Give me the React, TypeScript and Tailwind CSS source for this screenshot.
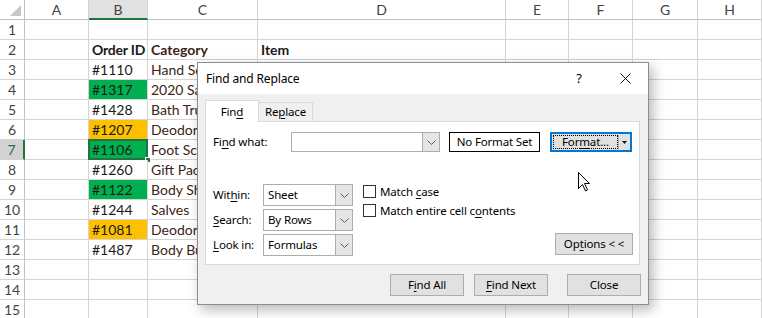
import type { ReactNode } from 'react';

const cols = ['A', 'B', 'C', 'D', 'E', 'F', 'G', 'H'];

type Row = { b?: string; c?: string; d?: string; fill?: string; bold?: boolean; selected?: boolean };

const rows: Row[] = [
  {},
  { b: 'Order ID', c: 'Category', d: 'Item', bold: true },
  { b: '#1110', c: 'Hand Soap' },
  { b: '#1317', c: '2020 Sampler', fill: 'green' },
  { b: '#1428', c: 'Bath Truffles' },
  { b: '#1207', c: 'Deodorant', fill: 'yellow' },
  { b: '#1106', c: 'Foot Scrub', fill: 'green', selected: true },
  { b: '#1260', c: 'Gift Pack' },
  { b: '#1122', c: 'Body Shimmer', fill: 'green' },
  { b: '#1244', c: 'Salves' },
  { b: '#1081', c: 'Deodorant', fill: 'yellow' },
  { b: '#1487', c: 'Body Butter' },
  {},
  {},
  {},
];

function U({ children }: { children: ReactNode }) {
  return <span className="underline underline-offset-2">{children}</span>;
}

function Chevron() {
  return (
    <svg width="9" height="5" viewBox="0 0 9 5" className="block">
      <polyline points="0.5,0.5 4.5,4.5 8.5,0.5" fill="none" stroke="#5a5a5a" strokeWidth="1" />
    </svg>
  );
}

function Combo({ value, className }: { value?: string; className: string }) {
  return (
    <div className={`flex border border-[#adadad] bg-white ${className}`}>
      <div className="flex flex-1 items-center pl-[4px] text-black">{value}</div>
      <div className="flex w-[17px] items-center justify-center border-l border-[#adadad] bg-[#e5e5e5]">
        <Chevron />
      </div>
    </div>
  );
}

function Btn({ children, className = '' }: { children: ReactNode; className?: string }) {
  return (
    <div
      className={`flex h-[22px] w-[74px] items-center justify-center border border-[#adadad] bg-[#e1e1e1] leading-none text-black ${className}`}
    >
      <span>{children}</span>
    </div>
  );
}

function Checkbox({ children }: { children: ReactNode }) {
  return (
    <div className="flex h-[13px] items-center gap-[4px]">
      <div className="h-[13px] w-[13px] border border-[#333333] bg-white" />
      <span className="whitespace-nowrap leading-none text-black">{children}</span>
    </div>
  );
}

function Dialog() {
  return (
    <div className="absolute left-[197px] top-[62px] flex h-[243px] w-[452px] flex-col border border-[#8c8c8c] bg-[#f0f0f0] font-['Noto_Sans',sans-serif] text-[11.5px] tracking-[-0.15px] shadow-[4px_5px_12px_rgba(0,0,0,0.28)]">
      <div className="flex h-[31px] items-center bg-white pl-[8px]">
        <span className="flex-1 text-[12px] text-black">Find and Replace</span>
        <span className="flex w-[46px] justify-center text-[13px] text-black">?</span>
        <div className="flex w-[46px] justify-center">
          <svg width="11" height="11" viewBox="0 0 11 11">
            <path d="M0.5 0.5 L10.5 10.5 M10.5 0.5 L0.5 10.5" stroke="#111" strokeWidth="1" />
          </svg>
        </div>
      </div>

      <div className="flex flex-col px-[7px] pt-[6px]">
        <div className="flex items-end">
          <div className="relative z-10 -mb-px flex h-[22px] w-[54px] items-center justify-center border border-b-0 border-[#d9d9d9] bg-white leading-none text-black">
            <span>
              Fin<U>d</U>
            </span>
          </div>
          <div className="flex h-[19px] w-[54px] items-center justify-center border border-b-0 border-l-0 border-[#d9d9d9] leading-none text-black">
            <span>
              Re<U>p</U>lace
            </span>
          </div>
        </div>

        <div className="mr-[1px] flex h-[144px] flex-col border border-[#d9d9d9] bg-white pl-[7px] pr-[6px]">
          <div className="mt-[10px] flex h-[20px] items-center">
            <span className="w-[78px] leading-none text-black">
              Fi<U>n</U>d what:
            </span>
            <Combo className="h-[20px] w-[149px]" />
            <div className="ml-[9px] flex h-[20px] w-[91px] items-center justify-center border border-black text-black">
              No Format Set
            </div>
            <div className="ml-[10px] flex h-[20px] w-[82px] items-center border-2 border-[#0078d7] bg-[#e1e1e1] p-px">
              <div className="flex h-full flex-1 items-center justify-center border border-dotted border-black leading-none text-black">
                <span>
                  For<U>m</U>at...
                </span>
              </div>
              <div className="flex h-full w-[11px] items-center justify-center border-l border-[#adadad]">
                <svg width="5" height="3" viewBox="0 0 5 3">
                  <path d="M0 0 L5 0 L2.5 3 Z" fill="#111" />
                </svg>
              </div>
            </div>
          </div>

          <div className="mt-[32px] flex">
            <div className="flex flex-col gap-[3px]">
              <div className="flex h-[22px] items-center">
                <span className="w-[50px] leading-none text-black">
                  Wit<U>h</U>in:
                </span>
                <Combo value="Sheet" className="h-[22px] w-[90px]" />
              </div>
              <div className="flex h-[22px] items-center">
                <span className="w-[50px] leading-none text-black">
                  <U>S</U>earch:
                </span>
                <Combo value="By Rows" className="h-[22px] w-[90px]" />
              </div>
              <div className="flex h-[22px] items-center">
                <span className="w-[50px] leading-none text-black">
                  <U>L</U>ook in:
                </span>
                <Combo value="Formulas" className="h-[22px] w-[90px]" />
              </div>
            </div>
            <div className="ml-[10px] flex flex-1 flex-col">
              <div className="mt-px flex flex-col gap-[6px]">
                <Checkbox>
                  Match <U>c</U>ase
                </Checkbox>
                <Checkbox>
                  Match entire cell c<U>o</U>ntents
                </Checkbox>
              </div>
              <Btn className="mb-px mt-auto w-[78px] self-end">
                Op<U>t</U>ions &lt; &lt;
              </Btn>
            </div>
          </div>
        </div>

        <div className="mt-[9px] flex justify-end">
          <Btn>
            F<U>i</U>nd All
          </Btn>
          <Btn className="ml-[10px]">
            <U>F</U>ind Next
          </Btn>
          <Btn className="ml-[19px]">Close</Btn>
        </div>
      </div>
    </div>
  );
}

function Sheet() {
  return (
    <div className="grid auto-rows-[20px] grid-cols-[25px_64px_59px_110px_248px_63px_64px_65px_64px] font-['Lato',sans-serif] text-[14px] text-[#1a1a1a]">
      <div className="relative border-b border-r border-[#bfbfbf] bg-white">
        <svg width="11" height="11" viewBox="0 0 11 11" className="absolute bottom-[3px] right-[3px]">
          <path d="M11 0 L11 11 L0 11 Z" fill="#c8c8c8" />
        </svg>
      </div>
      {cols.map((c) => (
        <div
          key={c}
          className={`flex items-center justify-center border-r border-[#d4d4d4] text-[#444] ${
            c === 'B' ? 'border-b-2 border-b-[#217346] bg-[#e1e1e1]' : 'border-b border-b-[#bfbfbf] bg-white'
          }`}
        >
          {c}
        </div>
      ))}
      {rows.map((r, i) => {
        const n = i + 1;
        const fill = r.fill === 'green' ? 'bg-[#00b050]' : r.fill === 'yellow' ? 'bg-[#ffc000]' : 'bg-white';
        return [
          <div
            key={`h${n}`}
            className={`flex items-center justify-center border-b border-[#d4d4d4] ${
              r.selected ? 'border-r-2 border-r-[#217346] bg-[#d2d2d2] text-[#217346]' : 'border-r border-r-[#bfbfbf] bg-white text-[#444]'
            }`}
          >
            {n}
          </div>,
          <div key={`a${n}`} className="border-b border-r border-[#d4d4d4]" />,
          <div
            key={`b${n}`}
            className={`relative flex items-center whitespace-nowrap border-b border-r border-[#d4d4d4] px-[3px] ${fill} ${
              r.bold ? 'font-bold tracking-[-0.2px]' : ''
            }`}
          >
            {r.b}
            {r.selected && (
              <>
                <div className="absolute -left-px -top-px bottom-[-1px] right-[-1px] border-2 border-[#217346]" />
                <div className="absolute bottom-[-4px] right-[-4px] h-[6px] w-[6px] border border-white bg-[#217346]" />
              </>
            )}
          </div>,
          <div
            key={`c${n}`}
            className={`flex items-center overflow-hidden whitespace-nowrap border-b border-r border-[#d4d4d4] px-[3px] text-[#3b2414] ${
              r.bold ? 'font-bold text-[#1a1a1a]' : ''
            }`}
          >
            {r.c}
          </div>,
          <div
            key={`d${n}`}
            className={`flex items-center whitespace-nowrap border-b border-r border-[#d4d4d4] px-[3px] ${r.bold ? 'font-bold' : ''}`}
          >
            {r.d}
          </div>,
          ...['e', 'f', 'g', 'h'].map((k) => <div key={`${k}${n}`} className="border-b border-r border-[#d4d4d4]" />),
        ];
      })}
    </div>
  );
}

export default function App() {
  return (
    <div className="relative h-[318px] w-[762px] overflow-hidden bg-white">
      <Sheet />
      <Dialog />
      <svg width="13" height="20" viewBox="0 0 13 20" className="absolute left-[578px] top-[172px]">
        <path d="M0.5 0.5 L0.5 16.5 L4.5 12.5 L7.5 19 L9.5 18 L6.5 11.5 L11.5 11.5 Z" fill="white" stroke="black" strokeWidth="1" />
      </svg>
    </div>
  );
}
